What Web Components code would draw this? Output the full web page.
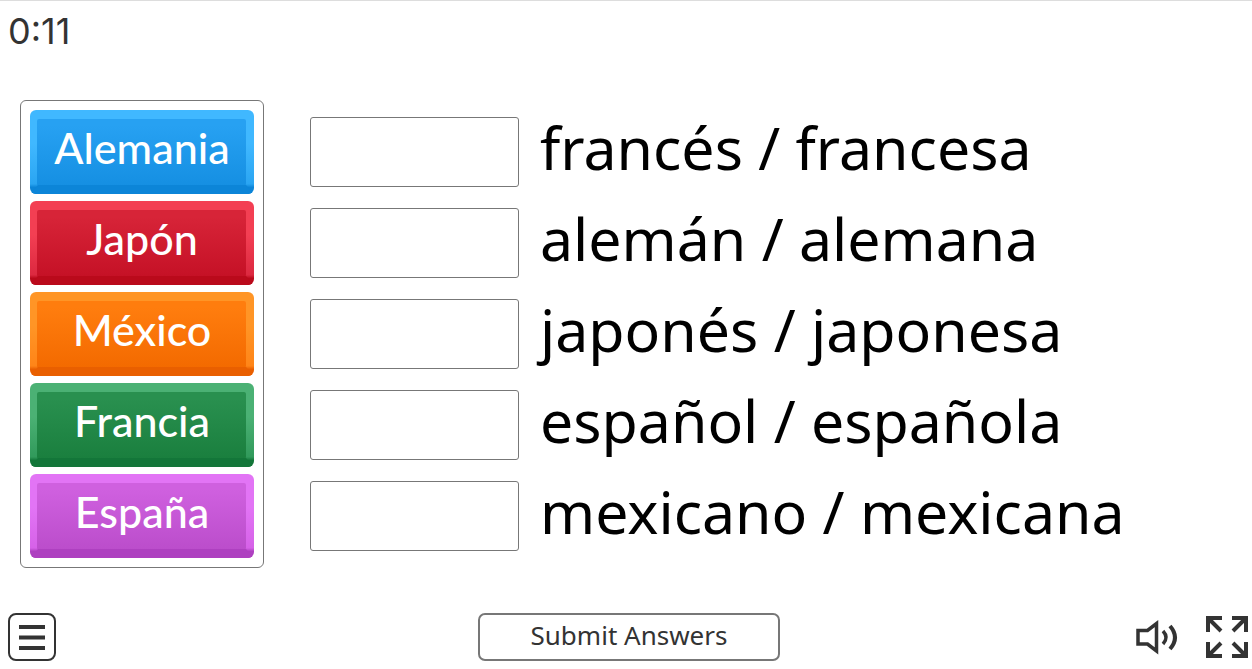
<!DOCTYPE html>
<html lang="es">
<head>
<meta charset="utf-8">
<meta name="viewport" content="width=device-width, initial-scale=1">
<title>Match up</title>
<style>
html, body { margin: 0; background: #fff; }
body { font-family: "Noto Sans", "Open Sans", sans-serif; color: #333; }
</style>
</head>
<body>
<match-game></match-game>
<script>
function define(name, html) {
  const template = document.createElement('template');
  template.innerHTML = html;
  customElements.define(name, class extends HTMLElement {
    constructor() {
      super();
      this.attachShadow({ mode: 'open' }).append(template.content.cloneNode(true));
    }
  });
}

define('game-timer', `
<style>
:host { display: block; padding: 8px; font-family: Inter, sans-serif; font-size: 36px; line-height: 44px; }
</style>
<slot></slot>`);

/* Bevelled keyword tile; its colours come from custom properties. */
define('word-tile', `
<style>
:host { display: block; }
button {
  display: block; box-sizing: border-box; width: 100%; height: 84px; padding: 0 0 8px;
  border: 0; border-radius: 6px; color: #fff; cursor: grab;
  font: 500 43px/76px Lato, sans-serif; position: relative; overflow: hidden;
  background: linear-gradient(var(--edge) 40%, var(--edge-low) 88%, var(--base) 92%);
}
button::before {
  content: ""; position: absolute; inset: 9px 8px 8px 7px;
  background: linear-gradient(var(--top) 10%, var(--bottom));
  border-radius: 2px;
}
button::after {
  content: ""; position: absolute; inset: auto 0 0; height: 9px;
  background: var(--base);
  clip-path: polygon(8px 0, calc(100% - 8px) 0, 100% 100%, 0 100%);
}
span { position: relative; }
</style>
<button type="button" draggable="true"><span><slot></slot></span></button>`);

define('word-bank', `
<style>
:host { display: grid; gap: 7px; box-sizing: border-box; width: 244px; padding: 9px; border: 1px solid #777; border-radius: 6px; }
</style>
<slot></slot>`);

define('answer-row', `
<style>
:host { display: flex; align-items: center; gap: 21px; height: 84px; color: #000; }
.drop { box-sizing: border-box; flex: none; width: 209px; height: 70px; border: 1px solid #777; border-radius: 3px; }
.text { font-size: 59px; line-height: 84px; white-space: nowrap; padding-bottom: 10px; }
</style>
<div class="drop"></div><div class="text"><slot></slot></div>`);

define('answer-list', `
<style>:host { display: grid; gap: 7px; align-content: start; padding-top: 10px; }</style>
<slot></slot>`);

define('submit-button', `
<style>
button {
  display: block; box-sizing: border-box; width: 302px; height: 48px; padding: 0 0 4px;
  border: 2px solid #777; border-radius: 7px; background: #fff; color: #333;
  font: 400 26px/40px "Noto Sans", sans-serif; cursor: pointer;
}
</style>
<button type="submit"><slot></slot></button>`);

define('menu-button', `
<style>
:host { display: block; }
button { display: block; width: 48px; height: 48px; padding: 0; border: 0; background: none; cursor: pointer; }
svg { display: block; }
</style>
<button type="button" aria-label="Menu">
<svg width="48" height="48" fill="none" stroke="#333"><rect x="1" y="1" width="46" height="46" rx="7" stroke-width="2"/><path d="M11 14h26M11 24.500h26M11 35h26" stroke-width="4"/></svg>
</button>`);

define('screen-controls', `
<style>
:host { display: flex; justify-content: flex-end; gap: 25px; }
button { display: block; height: 48px; padding: 0; border: 0; background: none; cursor: pointer; }
svg { display: block; }
</style>
<button type="button" aria-label="Sound">
<svg width="44" height="48" fill="none" stroke="#333"><path d="M3 17.500h9.500l9-7v27.500l-9-7H3z" stroke-width="3.500"/><path d="M28 18q6 6.500 0 13" stroke-width="3.500"/><path d="M35 13q10 11.500 0 23" stroke-width="4"/></svg>
</button>
<button type="button" aria-label="Full screen">
<svg width="46" height="48" fill="none" stroke="#333" stroke-width="4"><path d="M4 19V5h14M5 6l12 12M28 5h14v14M41 6L29 18M4 29v14h14M5 42l12-12M42 29v14H28M41 42L29 30"/></svg>
</button>`);

define('match-game', `
<style>
:host { display: flex; flex-direction: column; box-sizing: border-box; min-height: 100vh; border-top: 1px solid #ddd; }
main { display: flex; gap: 46px; padding: 39px 20px; }
footer { display: grid; grid-template-columns: 1fr auto 1fr; align-items: center; margin-top: auto; padding: 0 2px 8px 8px; }
word-tile.blue { --edge: #40b8ff; --edge-low: #2aa5f2; --top: #27a1f2; --bottom: #158fe2; --base: #0c85d8; }
word-tile.red { --edge: #f33f53; --edge-low: #dc2940; --top: #d72438; --bottom: #c51126; --base: #ba0a1b; }
word-tile.orange { --edge: #ff9526; --edge-low: #ff8518; --top: #ff7d0e; --bottom: #f36a00; --base: #e95f00; }
word-tile.green { --edge: #4bb174; --edge-low: #319a5b; --top: #29904f; --bottom: #1a7f3e; --base: #137639; }
word-tile.violet { --edge: #e274f5; --edge-low: #d662e8; --top: #cf60df; --bottom: #bb4dcb; --base: #ae40c0; }
</style>
<game-timer>0:11</game-timer>
<main>
<word-bank>
<word-tile class="blue">Alemania</word-tile>
<word-tile class="red">Japón</word-tile>
<word-tile class="orange">México</word-tile>
<word-tile class="green">Francia</word-tile>
<word-tile class="violet">España</word-tile>
</word-bank>
<answer-list>
<answer-row>francés / francesa</answer-row>
<answer-row>alemán / alemana</answer-row>
<answer-row>japonés / japonesa</answer-row>
<answer-row>español / española</answer-row>
<answer-row>mexicano / mexicana</answer-row>
</answer-list>
</main>
<footer>
<menu-button></menu-button>
<submit-button>Submit Answers</submit-button>
<screen-controls></screen-controls>
</footer>`);
</script>
</body>
</html>
